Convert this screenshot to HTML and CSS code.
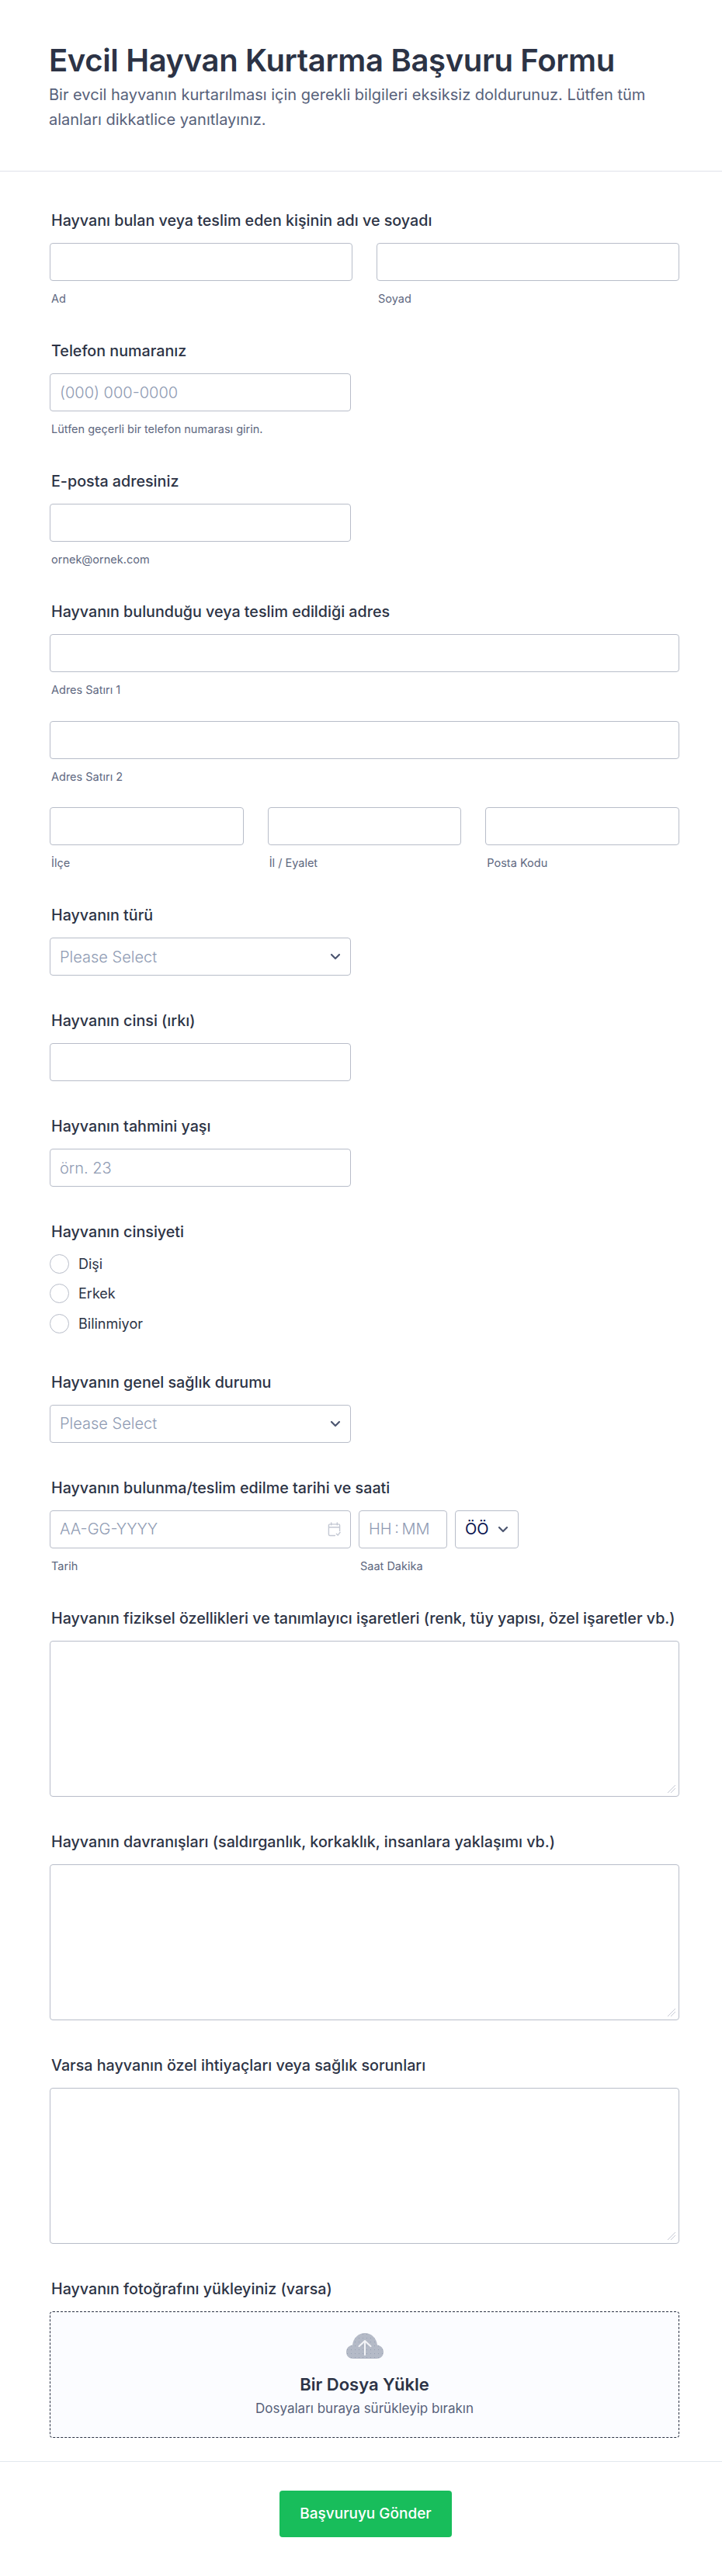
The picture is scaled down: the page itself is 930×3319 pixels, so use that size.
FILE: index.html
```html
<!DOCTYPE html>
<html lang="tr">
<head>
<meta charset="utf-8">
<title>Evcil Hayvan Kurtarma Başvuru Formu</title>
<link rel="stylesheet" href="styles.css">
</head>
<body>
<form class="form">
  <header class="head">
    <h1 class="title">Evcil Hayvan Kurtarma Başvuru Formu</h1>
    <p class="desc">Bir evcil hayvanın kurtarılması için gerekli bilgileri eksiksiz doldurunuz. Lütfen tüm alanları dikkatlice yanıtlayınız.</p>
  </header>
  <div class="fields">
    <div class="field">
      <label class="label">Hayvanı bulan veya teslim eden kişinin adı ve soyadı</label>
      <div class="cols cols-2">
        <div><input class="input" type="text"><div class="sub">Ad</div></div>
        <div><input class="input" type="text"><div class="sub">Soyad</div></div>
      </div>
    </div>
    <div class="field">
      <label class="label">Telefon numaranız</label>
      <input class="input half" type="text" placeholder="(000) 000-0000">
      <div class="sub">Lütfen geçerli bir telefon numarası girin.</div>
    </div>
    <div class="field">
      <label class="label">E-posta adresiniz</label>
      <input class="input half" type="text">
      <div class="sub">ornek@ornek.com</div>
    </div>
    <div class="field">
      <label class="label">Hayvanın bulunduğu veya teslim edildiği adres</label>
      <div class="stack">
        <div><input class="input" type="text"><div class="sub">Adres Satırı 1</div></div>
        <div><input class="input" type="text"><div class="sub">Adres Satırı 2</div></div>
        <div class="cols cols-3">
          <div><input class="input" type="text"><div class="sub">İlçe</div></div>
          <div><input class="input" type="text"><div class="sub">İl / Eyalet</div></div>
          <div><input class="input" type="text"><div class="sub">Posta Kodu</div></div>
        </div>
      </div>
    </div>
    <div class="field">
      <label class="label">Hayvanın türü</label>
      <div class="select half"><span class="ph">Please Select</span>
        <svg class="chev" viewBox="0 0 14 9"><path d="M2 2l5 5 5-5"/></svg></div>
    </div>
    <div class="field">
      <label class="label">Hayvanın cinsi (ırkı)</label>
      <input class="input half" type="text">
    </div>
    <div class="field">
      <label class="label">Hayvanın tahmini yaşı</label>
      <input class="input half" type="text" placeholder="örn. 23">
    </div>
    <div class="field field-radios">
      <label class="label">Hayvanın cinsiyeti</label>
      <div class="radios">
        <div class="radio"><span class="dot"></span>Dişi</div>
        <div class="radio"><span class="dot"></span>Erkek</div>
        <div class="radio"><span class="dot"></span>Bilinmiyor</div>
      </div>
    </div>
    <div class="field">
      <label class="label">Hayvanın genel sağlık durumu</label>
      <div class="select half"><span class="ph">Please Select</span>
        <svg class="chev" viewBox="0 0 14 9"><path d="M2 2l5 5 5-5"/></svg></div>
    </div>
    <div class="field">
      <label class="label">Hayvanın bulunma/teslim edilme tarihi ve saati</label>
      <div class="dt">
        <div class="dt-date">
          <div class="select"><span class="ph">AA-GG-YYYY</span>
            <svg class="cal" viewBox="0 0 18 20"><path d="M5 1v3M13 1v3M1.500 7h15M16.500 12V4.500a1.500 1.500 0 0 0-1.500-1.500H3a1.500 1.500 0 0 0-1.500 1.500V17A1.500 1.500 0 0 0 3 18.500h7"/><path d="m12 16 2 2 3-4"/></svg></div>
          <div class="sub">Tarih</div>
        </div>
        <div class="dt-time">
          <div class="select"><span class="ph time-ph">HH : MM</span></div>
          <div class="sub">Saat Dakika</div>
        </div>
        <div class="dt-ampm">
          <div class="select"><span class="val">ÖÖ</span>
            <svg class="chev" viewBox="0 0 14 9"><path d="M2 2l5 5 5-5"/></svg></div>
        </div>
      </div>
    </div>
    <div class="field">
      <label class="label">Hayvanın fiziksel özellikleri ve tanımlayıcı işaretleri (renk, tüy yapısı, özel işaretler vb.)</label>
      <textarea class="area"></textarea>
    </div>
    <div class="field">
      <label class="label">Hayvanın davranışları (saldırganlık, korkaklık, insanlara yaklaşımı vb.)</label>
      <textarea class="area"></textarea>
    </div>
    <div class="field">
      <label class="label">Varsa hayvanın özel ihtiyaçları veya sağlık sorunları</label>
      <textarea class="area"></textarea>
    </div>
    <div class="field field-last">
      <label class="label">Hayvanın fotoğrafını yükleyiniz (varsa)</label>
      <div class="upload">
        <svg class="cloud" viewBox="0 0 48 33">
          <defs><pattern id="dots" width="5" height="5" patternUnits="userSpaceOnUse"><circle cx="1.500" cy="1.500" r=".5" fill="#8d97ab"/></pattern></defs>
          <path class="cloud-shape" d="M9 33C4 33 0 29.500 0 24.500 0 19.500 3.500 16 8 15.500 9 6.500 15.500 0 24 0s15 6.500 16 15.500c4.500.5 8 4 8 9S44 33 39 33Z"/>
          <path fill="url(#dots)" d="M9 33C4 33 0 29.500 0 24.500 0 19.500 3.500 16 8 15.500 9 6.500 15.500 0 24 0s15 6.500 16 15.500c4.500.5 8 4 8 9S44 33 39 33Z"/>
          <path class="cloud-arrow" d="M24 28V10M16.500 17 24 10l7.500 7"/>
        </svg>
        <div class="up-title">Bir Dosya Yükle</div>
        <div class="up-sub">Dosyaları buraya sürükleyip bırakın</div>
      </div>
    </div>
  </div>
  <footer class="foot">
    <button class="submit" type="button">Başvuruyu Gönder</button>
  </footer>
</form>
</body>
</html>
```
FILE: styles.css
```css
* { box-sizing: border-box; }
html, body { margin: 0; padding: 0; background: #fff; }
body { font-family: Inter, "Noto Sans", sans-serif; color: #2c3345; }

.head { height: 221px; padding: 51px 55px 0 63px; border-bottom: 1px solid #dfe2ea; }
.title { margin: 0; font-size: 40px; line-height: 54px; font-weight: 600; letter-spacing: -.35px; color: #2c3345; }
.desc { margin: 1px 0 0; font-size: 20px; line-height: 32px; color: #57617a; }

.fields { padding: 51px 55px 0 64px; }
.field { margin-bottom: 46px; }
.field-radios { margin-bottom: 51px; }
.field-last { margin-bottom: 30px; }
.label { display: block; height: 24px; margin: 0 0 17px 2px; font-size: 19.700px; line-height: 24px; font-weight: 450; color: #2c3345; white-space: nowrap; }

.input, .select, .area { border: 1px solid #b8bdc9; border-radius: 4px; background: #fff; }
.input { display: block; width: 100%; height: 49px; padding: 0 12px; font: 300 20px Inter, sans-serif; color: #2c3345; outline: 0; }
.input::placeholder { color: #8f9bb3; opacity: 1; }
.half { width: 388px; }

.sub { height: 18px; margin: 14px 0 0 2px; font-size: 14.500px; line-height: 18px; color: #5e6880; white-space: nowrap; }

.cols { display: grid; column-gap: 31px; }
.cols-2 { grid-template-columns: 1fr 1fr; }
.cols-3 { grid-template-columns: 1fr 1fr 1fr; }
.stack { display: flex; flex-direction: column; gap: 30.5px; }

.select { display: flex; align-items: center; justify-content: space-between; height: 49px; padding: 0 12px; font-size: 20px; }
.ph { font-weight: 300; color: #8f9bb3; white-space: nowrap; }
.time-ph { word-spacing: -2px; }
.val { color: #0a1551; }
.chev { width: 14px; height: 9px; fill: none; stroke: #4c5670; stroke-width: 2.200; stroke-linecap: round; stroke-linejoin: round; }
.cal { width: 17px; height: 19px; fill: none; stroke: #c3c8d3; stroke-width: 1.500; stroke-linecap: round; stroke-linejoin: round; }

.radios { display: flex; flex-direction: column; gap: 13.300px; margin-top: 2px; }
.radio { display: flex; align-items: center; gap: 12px; height: 25px; font-size: 18px; color: #2c3345; }
.dot { width: 25px; height: 25px; border: 1px solid #b8bdc9; border-radius: 50%; background: #fff; }

.dt { display: flex; gap: 10px; }
.dt-date { width: 388px; }
.dt-time { width: 114px; }
.dt-ampm { width: 82px; }

.area { display: block; width: 100%; height: 201px; padding: 12px; font: 400 18px Inter, sans-serif; outline: 0; }
.area::-webkit-resizer {
  background: linear-gradient(135deg, transparent 7.900px, #c8cbd6 7.900px, #c8cbd6 9.100px, transparent 9.100px, transparent 10.700px, #c8cbd6 10.700px, #c8cbd6 11.900px, transparent 11.900px) 0 0 / 11px 11px no-repeat;
}

.upload { display: flex; flex-direction: column; align-items: center; height: 163px; padding-top: 27px; border: 1px dashed #2c3345; border-radius: 4px; background: #fbfcff; }
.cloud { width: 48px; height: 33px; }
.cloud-shape { fill: #b4bac7; }
.cloud-arrow { fill: none; stroke: #f3f4f7; stroke-width: 2; stroke-linecap: round; stroke-linejoin: round; }
.up-title { margin-top: 18px; font-size: 22px; line-height: 30px; font-weight: 600; color: #2c3345; }
.up-sub { margin-top: 4px; font-size: 17px; line-height: 24px; color: #57617a; }

.foot { height: 147px; padding: 37px 55px 0 67px; border-top: 1px solid #e3e8ee; text-align: center; }
.submit { width: 222px; height: 60px; border: 0; border-radius: 4px; background: #18bd5b; color: #fff; font: 500 19px Inter, sans-serif; }
```
